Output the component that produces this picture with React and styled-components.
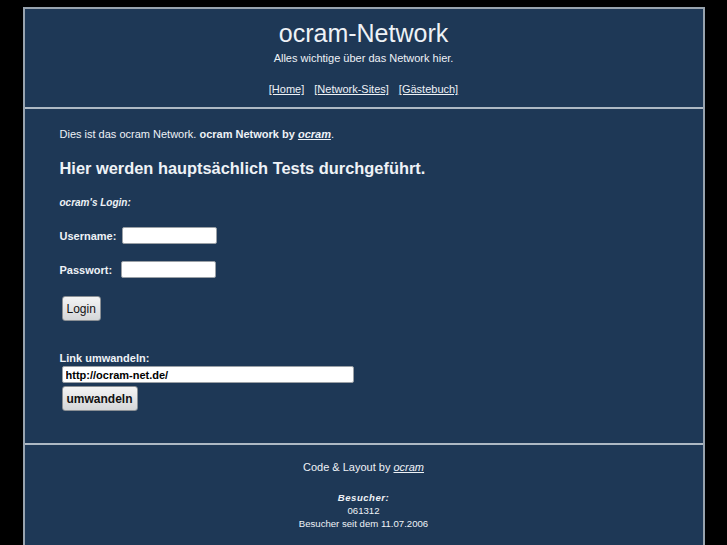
import styled, { createGlobalStyle } from 'styled-components';

const GlobalStyle = createGlobalStyle`
  html, body {
    margin: 0;
    padding: 0;
    background: #000;
  }
  body {
    font-family: "Liberation Sans", Arial, sans-serif;
    color: #eef2f6;
  }
`;

const Page = styled.div`
  box-sizing: border-box;
  width: 682px;
  margin: 7px auto 0;
  background: #1e3856;
  border: 2px solid #98a3ae;
  border-bottom: none;
`;

const Header = styled.header`
  text-align: center;
  padding: 9px 0 11px;
  border-bottom: 2px solid #aeb9c4;
`;

const Title = styled.h1`
  margin: 0;
  font-size: 25px;
  line-height: 30px;
  font-weight: normal;
`;

const Subtitle = styled.div`
  margin-top: 3px;
  font-size: 11px;
  line-height: 14px;
`;

const Nav = styled.nav`
  margin-top: 17px;
  display: flex;
  justify-content: center;
  gap: 10px;
  font-size: 11px;
  line-height: 14px;
`;

const NavLink = styled.a`
  color: #eef2f6;
  text-decoration: underline;
`;

const Main = styled.main`
  padding: 18px 35px 32px;
  border-bottom: 2px solid #aeb9c4;
`;

const Intro = styled.p`
  margin: 0;
  font-size: 11px;
  line-height: 14px;
`;

const Strong = styled.b`
  font-weight: bold;
`;

const Author = styled.a`
  color: #eef2f6;
  font-style: italic;
  font-weight: ${p => (p.$bold ? 'bold' : 'normal')};
  text-decoration: underline;
`;

const Heading = styled.h2`
  margin: 17px 0 0;
  font-size: 16.4px;
  line-height: 20px;
  font-weight: bold;
`;

const SectionLabel = styled.div`
  margin-top: ${p => p.$top}px;
  font-size: ${p => p.$size}px;
  line-height: ${p => p.$size + 3}px;
  font-weight: bold;
  font-style: ${p => (p.$italic ? 'italic' : 'normal')};
`;

const Field = styled.div`
  display: flex;
  align-items: center;
  gap: ${p => p.$gap}px;
  margin-top: ${p => p.$top}px;
`;

const FieldLabel = styled.label`
  font-size: 11px;
  font-weight: bold;
`;

const TextInput = styled.input`
  display: block;
  box-sizing: border-box;
  width: ${p => p.$width}px;
  height: 17px;
  margin: 0;
  padding: 0 3px;
  background: #fff;
  border: 1px solid #9aa0a6;
  border-radius: 2px;
  font-family: "Liberation Sans", Arial, sans-serif;
  font-size: 11px;
  font-weight: bold;
  color: #000;
  outline: none;
`;

const Button = styled.button`
  display: block;
  box-sizing: border-box;
  height: 25px;
  margin: ${p => p.$top}px 0 0 2px;
  padding: 0 4px;
  border: 1px solid #8a8f94;
  border-radius: 3px;
  background: linear-gradient(#f4f4f4, #d4d6d8);
  color: #111;
  font-family: "Liberation Sans", Arial, sans-serif;
  font-size: 12px;
  font-weight: ${p => (p.$bold ? 'bold' : 'normal')};
`;

const LinkInputWrap = styled.div`
  margin: 1px 0 0 2px;
`;

const Footer = styled.footer`
  text-align: center;
  padding-top: 15px;
  font-size: 11px;
  line-height: 14px;
`;

const Counter = styled.div`
  margin-top: 17px;
  font-size: 9.6px;
  line-height: 13px;
`;

const CounterTitle = styled.div`
  font-weight: bold;
  font-style: italic;
  letter-spacing: 0.5px;
`;

const Copy = styled.div`
  margin-top: 17px;
  font-size: 9.6px;
  line-height: 13px;
`;

function App() {
  return (
    <>
      <GlobalStyle />
      <Page>
        <Header>
          <Title>ocram-Network</Title>
          <Subtitle>Alles wichtige über das Network hier.</Subtitle>
          <Nav>
            <NavLink href="#">[Home]</NavLink>
            <NavLink href="#">[Network-Sites]</NavLink>
            <NavLink href="#">[Gästebuch]</NavLink>
          </Nav>
        </Header>

        <Main>
          <Intro>
            Dies ist das ocram Network. <Strong>ocram Network by </Strong>
            <Author href="#" $bold>ocram</Author>.
          </Intro>
          <Heading>Hier werden hauptsächlich Tests durchgeführt.</Heading>
          <SectionLabel $top={18} $size={10} $italic>ocram's Login:</SectionLabel>

          <Field $gap={6} $top={18}>
            <FieldLabel>Username:</FieldLabel>
            <TextInput $width={95} />
          </Field>
          <Field $gap={9} $top={17}>
            <FieldLabel>Passwort:</FieldLabel>
            <TextInput type="password" $width={95} />
          </Field>
          <Button $top={18}>Login</Button>

          <SectionLabel $top={30} $size={11}>Link umwandeln:</SectionLabel>
          <LinkInputWrap>
            <TextInput $width={292} defaultValue="http://ocram-net.de/" />
          </LinkInputWrap>
          <Button $top={3} $bold>umwandeln</Button>
        </Main>

        <Footer>
          <div>
            Code &amp; Layout by <Author href="#">ocram</Author>
          </div>
          <Counter>
            <CounterTitle>Besucher:</CounterTitle>
            <div>061312</div>
            <div>Besucher seit dem 11.07.2006</div>
          </Counter>
          <Copy>© 2006</Copy>
        </Footer>
      </Page>
    </>
  );
}

export default App;
